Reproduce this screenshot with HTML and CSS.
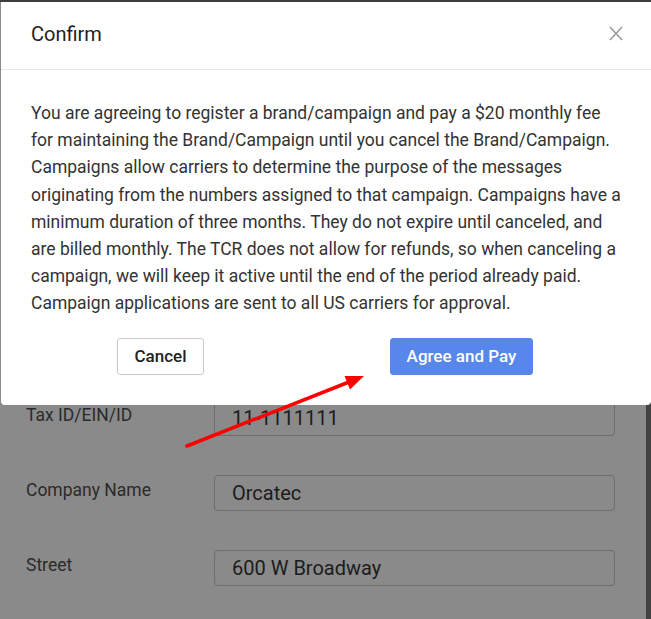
FILE: index.html
```html
<!DOCTYPE html>
<html lang="en">
<head>
    <meta charset="UTF-8">
    <meta name="viewport" content="width=device-width, initial-scale=1.0">
    <title>Confirm</title>
    <link rel="stylesheet" href="styles.css">
</head>
<body>
    <div class="screen">
        <div class="page">
            <form class="brand-form">
                <div class="row">
                    <label for="tax">Tax ID/EIN/ID</label>
                    <input type="text" id="tax" value="11-1111111">
                </div>
                <div class="row">
                    <label for="company">Company Name</label>
                    <input type="text" id="company" value="Orcatec">
                </div>
                <div class="row">
                    <label for="street">Street</label>
                    <input type="text" id="street" value="600 W Broadway">
                </div>
            </form>
        </div>
        <div class="scrollbar"></div>
    </div>

    <div class="modal">
        <div class="modal-header">
            <h3>Confirm</h3>
            <button class="close" type="button" aria-label="Close">
                <svg width="14" height="15" viewBox="0 0 14 15">
                    <path d="M1 1 L13 14 M13 1 L1 14" stroke="#999" stroke-width="1.5" fill="none"/>
                </svg>
            </button>
        </div>
        <div class="modal-body">
            <p>You are agreeing to register a brand/campaign and pay a $20 monthly fee for maintaining the Brand/Campaign until you cancel the Brand/Campaign. Campaigns allow carriers to determine the purpose of the messages originating from the numbers assigned to that campaign. Campaigns have a minimum duration of three months. They do not expire until canceled, and are billed monthly. The TCR does not allow for refunds, so when canceling a campaign, we will keep it active until the end of the period already paid. Campaign applications are sent to all US carriers for approval.</p>
        </div>
        <div class="modal-footer">
            <div class="col"><button class="btn btn-default" type="button">Cancel</button></div>
            <div class="col"><button class="btn btn-primary" type="button">Agree and Pay</button></div>
        </div>
    </div>

    <!-- annotation arrow -->
    <svg class="arrow" width="651" height="619" viewBox="0 0 651 619">
        <line x1="187" y1="446" x2="349" y2="382" stroke="#f00" stroke-width="3.5" stroke-linecap="round"/>
        <polygon points="364,376 350,389.5 344.5,376" fill="#f00"/>
    </svg>
</body>
</html>
```

FILE: styles.css
```css
body {
    margin: 0;
    font-family: Roboto, "Liberation Sans", sans-serif;
    background-color: #8a8a8a;
    overflow: hidden;
}

.screen {
    display: flex;
    height: 619px;
    border-top: 2px solid #3e3e3e;
    box-sizing: border-box;
}

.page {
    flex: 1;
}

.scrollbar {
    width: 5px;
    background-color: #424242;
}

.brand-form {
    padding: 398px 0 0 26px;
}

.row {
    display: flex;
    align-items: flex-start;
    margin-bottom: 39px;
}

.row label {
    width: 188px;
    font-size: 17.5px;
    line-height: 20px;
    padding-top: 5px;
    color: #2a2a2a;
}

.row input {
    width: 401px;
    height: 36px;
    box-sizing: border-box;
    padding: 0 17px;
    font-family: Roboto, "Liberation Sans", sans-serif;
    font-size: 20px;
    color: #1c1c1c;
    background-color: #8a8a8a;
    border: 1px solid #6c6c6c;
    border-radius: 4px;
    outline: none;
}

.modal {
    position: absolute;
    top: 2px;
    left: 1px;
    width: 650px;
    background-color: #fff;
    border-radius: 0 0 4px 4px;
}

.modal-header {
    height: 63px;
    display: flex;
    align-items: center;
    justify-content: space-between;
    padding: 0 28px 4px 30px;
    border-bottom: 1px solid #e8e8e8;
}

.modal-header h3 {
    margin: 0;
    font-size: 20px;
    font-weight: 400;
    color: #222;
}

.close {
    border: none;
    background: none;
    padding: 0;
    width: 14px;
    height: 15px;
    display: flex;
    cursor: pointer;
}

.modal-body {
    padding: 30px 28px 0 30px;
}

.modal-body p {
    margin: 0;
    font-size: 17.5px;
    line-height: 27.2px;
    color: #333;
}

.modal-footer {
    display: flex;
    padding: 20px 0 30px 9px;
}

.col {
    width: 301px;
    display: flex;
    justify-content: center;
}

.btn {
    height: 37px;
    padding: 0 16px;
    font-family: Roboto, "Liberation Sans", sans-serif;
    font-size: 17px;
    font-weight: 500;
    border-radius: 3px;
    cursor: pointer;
}

.btn-default {
    background-color: #fff;
    border: 1px solid #c9c9d3;
    color: #222;
}

.btn-primary {
    background-color: #5787eb;
    border: 1px solid #5787eb;
    color: #fff;
}

.arrow {
    position: absolute;
    top: 0;
    left: 0;
    pointer-events: none;
}
```
